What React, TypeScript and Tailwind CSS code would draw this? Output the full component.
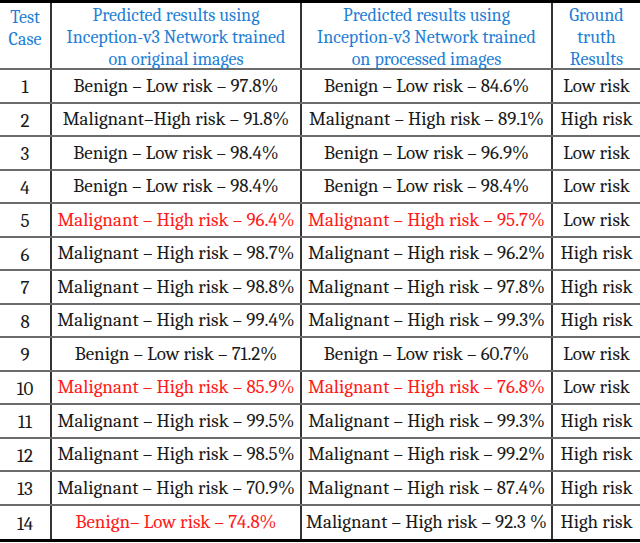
import React from 'react'

type Row = {
  id: number
  original: string
  processed: string
  truth: string
  originalRed?: boolean
  processedRed?: boolean
}

const rows: Row[] = [
  { id: 1, original: 'Benign – Low risk – 97.8%', processed: 'Benign – Low risk – 84.6%', truth: 'Low risk' },
  { id: 2, original: 'Malignant–High risk – 91.8%', processed: 'Malignant – High risk – 89.1%', truth: 'High risk' },
  { id: 3, original: 'Benign – Low risk – 98.4%', processed: 'Benign – Low risk – 96.9%', truth: 'Low risk' },
  { id: 4, original: 'Benign – Low risk – 98.4%', processed: 'Benign – Low risk – 98.4%', truth: 'Low risk' },
  { id: 5, original: 'Malignant – High risk – 96.4%', processed: 'Malignant – High risk – 95.7%', truth: 'Low risk', originalRed: true, processedRed: true },
  { id: 6, original: 'Malignant – High risk – 98.7%', processed: 'Malignant – High risk – 96.2%', truth: 'High risk' },
  { id: 7, original: 'Malignant – High risk – 98.8%', processed: 'Malignant – High risk – 97.8%', truth: 'High risk' },
  { id: 8, original: 'Malignant – High risk – 99.4%', processed: 'Malignant – High risk – 99.3%', truth: 'High risk' },
  { id: 9, original: 'Benign – Low risk – 71.2%', processed: 'Benign – Low risk – 60.7%', truth: 'Low risk' },
  { id: 10, original: 'Malignant – High risk – 85.9%', processed: 'Malignant – High risk – 76.8%', truth: 'Low risk', originalRed: true, processedRed: true },
  { id: 11, original: 'Malignant – High risk – 99.5%', processed: 'Malignant – High risk – 99.3%', truth: 'High risk' },
  { id: 12, original: 'Malignant – High risk – 98.5%', processed: 'Malignant – High risk – 99.2%', truth: 'High risk' },
  { id: 13, original: 'Malignant – High risk – 70.9%', processed: 'Malignant – High risk – 87.4%', truth: 'High risk' },
  { id: 14, original: 'Benign– Low risk – 74.8%', processed: 'Malignant – High risk – 92.3 %', truth: 'High risk', originalRed: true },
]

export default function App() {
  return (
    <div className="w-[640px] h-[543px] bg-white text-[#1a1a1a] font-serif overflow-hidden">
      {/* tabela */}
      <div className="border-t-[3px] border-b-[3px] border-black">
        {/* cabeçalho */}
        <div className="flex h-[67px] text-[18px] leading-[22px] text-[#1f7fd6] text-center border-b-2 border-[#6b6b6b]">
          <div className="w-[52px] shrink-0 border-r-2 border-[#333] flex flex-col justify-center pb-[14px]">
            <span>Test</span>
            <span>Case</span>
          </div>
          <div className="w-[250px] shrink-0 border-r-2 border-[#333] flex flex-col justify-center pt-[5px]">
            <span>Predicted results using</span>
            <span>Inception-v3 Network trained</span>
            <span>on original images</span>
          </div>
          <div className="w-[251px] shrink-0 border-r-2 border-[#333] flex flex-col justify-center pt-[5px]">
            <span>Predicted results using</span>
            <span>Inception-v3 Network trained</span>
            <span>on processed images</span>
          </div>
          <div className="flex-1 flex flex-col justify-center pt-[5px]">
            <span>Ground</span>
            <span>truth</span>
            <span>Results</span>
          </div>
        </div>

        {/* linhas */}
        {rows.map((r, i) => (
          <div
            key={r.id}
            className={
              'flex h-[33.5px] text-[19px] text-center ' +
              (i < rows.length - 1 ? 'border-b-2 border-[#6b6b6b]' : '')
            }
          >
            <div className="w-[52px] shrink-0 border-r-2 border-[#333] flex items-center justify-center pt-[3px]">
              {r.id}
            </div>
            <div
              className={
                'w-[250px] shrink-0 border-r-2 border-[#333] flex items-center justify-center ' +
                (r.originalRed ? 'text-[#ff1a1a]' : '')
              }
            >
              {r.original}
            </div>
            <div
              className={
                'w-[251px] shrink-0 border-r-2 border-[#333] flex items-center justify-center ' +
                (r.processedRed ? 'text-[#ff1a1a]' : '')
              }
            >
              {r.processed}
            </div>
            <div className="flex-1 flex items-center justify-center">{r.truth}</div>
          </div>
        ))}
      </div>
    </div>
  )
}
